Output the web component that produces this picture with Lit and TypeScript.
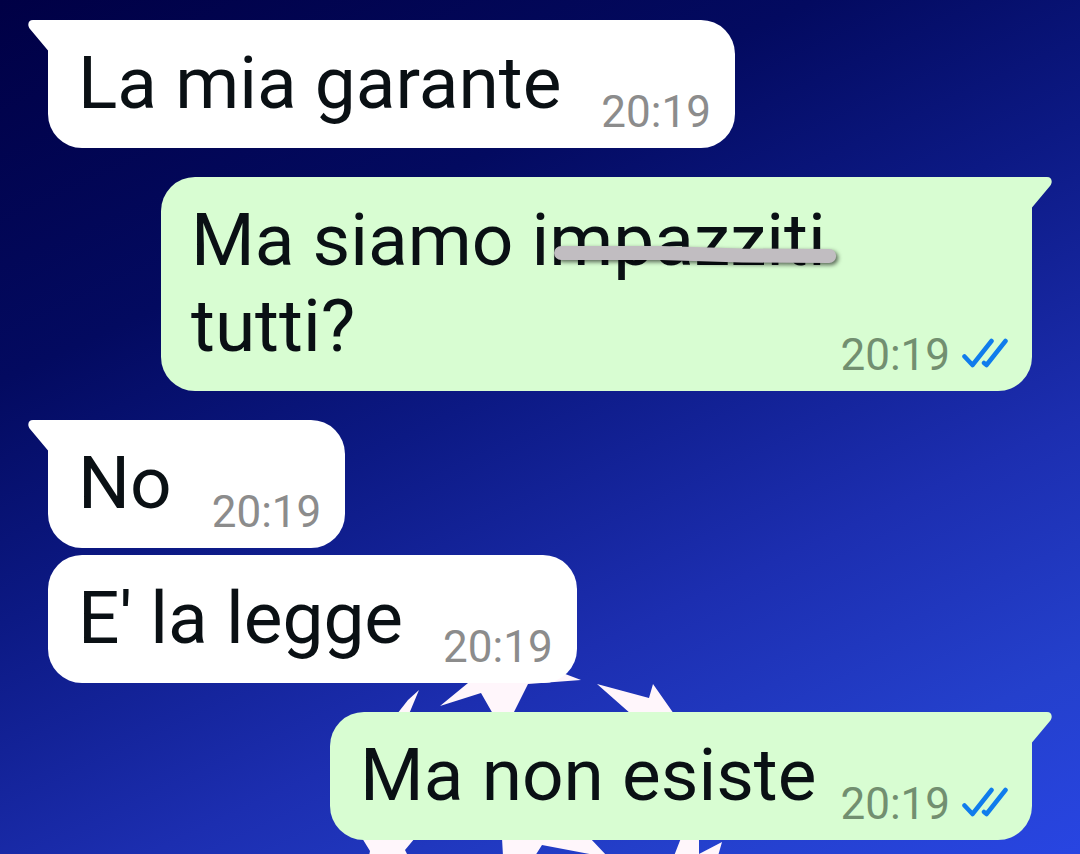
import { LitElement, html, css, nothing } from "lit";
import { customElement, property } from "lit/decorators.js";

interface Message {
  text: string;
  struck?: string;
  rest?: string;
  time: string;
  own: boolean;
  first: boolean;
}

const messages: Message[] = [
  { text: "La mia garante", time: "20:19", own: false, first: true },
  { text: "Ma siamo ", struck: "impazziti", rest: " tutti?", time: "20:19", own: true, first: true },
  { text: "No", time: "20:19", own: false, first: true },
  { text: "E' la legge", time: "20:19", own: false, first: false },
  { text: "Ma non esiste", time: "20:19", own: true, first: true },
];

@customElement("chat-message")
class ChatMessage extends LitElement {
  @property({ attribute: false }) message!: Message;

  static styles = css`
    :host {
      display: flex;
    }
    .bubble {
      position: relative;
      box-sizing: border-box;
      max-width: 871px;
      padding: 20px 24px 22px 30px;
      border-radius: 34px;
      background: #fff;
      color: #0a1014;
      font-size: 73px;
      line-height: 86px;
    }
    .own {
      margin-left: auto;
      background: #d8fdd2;
    }
    .first {
      border-top-left-radius: 0;
    }
    .own.first {
      border-top-left-radius: 34px;
      border-top-right-radius: 0;
    }
    .text {
      margin: 0;
      padding-right: 20px;
    }
    .tail {
      position: absolute;
      top: 0;
      right: 100%;
      width: 21px;
      height: 32px;
      margin-right: -1px;
      fill: #fff;
    }
    .own .tail {
      right: auto;
      left: 100%;
      margin: 0 0 0 -1px;
      transform: scaleX(-1);
      fill: #d8fdd2;
    }
    .meta {
      float: right;
      display: flex;
      align-items: center;
      gap: 12px;
      height: 52px;
      margin: 46px -20px -12px 40px;
      font-size: 44px;
      line-height: 52px;
      color: #8c8c8c;
    }
    .own .meta {
      margin-left: 24px;
      color: #728f70;
    }
    .ticks {
      width: 46px;
      height: 34px;
      fill: none;
      stroke: #107cec;
      stroke-width: 4.5;
      stroke-linecap: round;
      stroke-linejoin: round;
    }
    .struck {
      position: relative;
      white-space: nowrap;
    }
    .marker {
      position: absolute;
      left: 6%;
      top: 44px;
      width: 100%;
      height: 26px;
      overflow: visible;
      filter: drop-shadow(2px 2px 2px #0009);
    }
  `;

  render() {
    const m = this.message;
    return html`<article class="bubble ${m.own ? "own" : ""} ${m.first ? "first" : ""}">
      ${m.first
        ? html`<svg class="tail" viewBox="0 0 21 32" aria-hidden="true">
            <path d="M21 0H5C0 0-1 5 2 9L20 30.500L21 32Z" />
          </svg>`
        : nothing}
      <p class="text">${m.text}${m.struck
          ? html`<span class="struck">${m.struck}<svg class="marker" viewBox="0 0 290 26" preserveAspectRatio="none" aria-hidden="true">
                <path d="M12 12L110 12L190 14.500L276 15" fill="none" stroke="#c1bdc1" stroke-width="14" stroke-linecap="round" />
              </svg></span>`
          : nothing}${m.rest ?? nothing}<span class="meta"
          ><time>${m.time}</time>${m.own
            ? html`<svg class="ticks" viewBox="0 0 46 34" role="img" aria-label="Letto">
                <path d="M2.500 18.500L10.500 27L29.500 3M22 25L24.500 27L43.500 3" />
              </svg>`
            : nothing}</span
        ></p>
    </article>`;
  }
}

@customElement("app-root")
class AppRoot extends LitElement {
  static styles = css`
    :host {
      display: block;
      font-family: Roboto, "Liberation Sans", sans-serif;
    }
    .chat {
      position: relative;
      box-sizing: border-box;
      min-height: 100vh;
      overflow: hidden;
      padding: 20px 48px 14px;
      background: linear-gradient(155deg, #000045 0%, #030a60 28%, #0c1984 46%, #1c2eb0 68%, #2440cc 86%, #2845e2 100%);
    }
    .wallpaper {
      position: absolute;
      left: 0;
      bottom: 0;
      width: 100%;
      fill: #fff6fb;
    }
    .list {
      position: relative;
      display: flex;
      flex-direction: column;
    }
    .turn {
      margin-top: 29px;
    }
    .turn:first-child {
      margin-top: 0;
    }
    .follow {
      margin-top: 7px;
    }
  `;

  render() {
    return html`<main class="chat">
      <svg class="wallpaper" viewBox="0 660 1080 194" aria-hidden="true">
        <path d="M397 714L408 700L419 690L409 714Z" />
        <path d="M440 706L468 683L500 670L560 672L581 680L528 684L513 714H493L481 693Z" />
        <path d="M597 684L649 698L653 684L674 714H631Z" />
        <path d="M362 838H415L405 850L408 856H369L370 851Z" />
        <path d="M502 838H590L607 856H600L542 845L535 856H503Z" />
        <path d="M674 856L681 838H699V854L722 842L718 856Z" />
      </svg>
      <section class="list" aria-label="Messaggi">
        ${messages.map(
          (m) => html`<chat-message class=${m.first ? "turn" : "follow"} .message=${m}></chat-message>`,
        )}
      </section>
    </main>`;
  }
}
